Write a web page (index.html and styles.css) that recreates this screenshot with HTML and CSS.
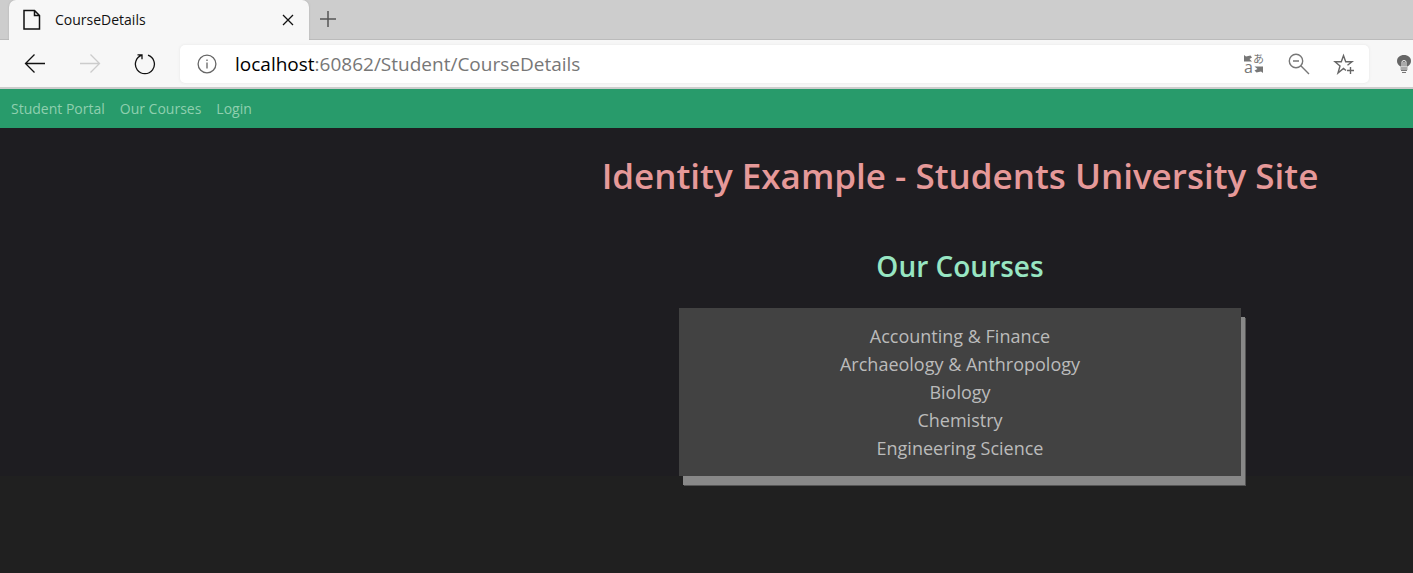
FILE: index.html
```html
<!DOCTYPE html>
<html lang="en">
<head>
<meta charset="utf-8">
<title>CourseDetails</title>
<link rel="stylesheet" href="styles.css">
</head>
<body>
<header class="browser">
  <div class="tabstrip">
    <div class="tab">
      <svg class="tab-icon" width="18" height="22" viewBox="0 0 18 22" fill="none" stroke="#111" stroke-width="1.5"><path d="M1 1.500h10.500l5 5v13.500h-15.500zM11.500 1.500v5h5"/></svg>
      <span class="tab-title">CourseDetails</span>
      <button class="tab-close" type="button" aria-label="Close tab"><svg width="12" height="12" viewBox="0 0 12 12" stroke="#111" stroke-width="1.300"><path d="M1 1l10 10M11 1L1 11"/></svg></button>
    </div>
    <button class="tab-new" type="button" aria-label="New tab"><svg width="18" height="18" viewBox="0 0 18 18" stroke="#555" stroke-width="1.500"><path d="M9 1v16M1 9h16"/></svg></button>
  </div>
  <div class="toolbar">
    <button class="tool" type="button" aria-label="Back"><svg width="22" height="20" viewBox="0 0 22 20" fill="none" stroke="#111" stroke-width="1.300"><path d="M21 9.500H2M10.500 .5l-9 9 9 9"/></svg></button>
    <button class="tool" type="button" aria-label="Forward" disabled><svg width="22" height="20" viewBox="0 0 22 20" fill="none" stroke="#ccc" stroke-width="1.300"><path d="M1 9.500h19M11.500 .5l9 9-9 9"/></svg></button>
    <button class="tool" type="button" aria-label="Refresh"><svg width="22" height="22" viewBox="0 0 22 22" fill="none" stroke="#111" stroke-width="1.300"><path d="M14 2.200A9.500 9.500 0 1 1 7.800 2.200M3.500 1.800H8v4.500"/></svg></button>
    <div class="address">
      <svg width="20" height="20" viewBox="0 0 20 20" fill="none" stroke="#666" stroke-width="1.300"><circle cx="10" cy="10" r="8.900"/><path d="M10 8.500v6M10 5.500v1.500"/></svg>
      <a class="url" href="#"><span class="host">localhost</span>:60862/Student/CourseDetails</a>
      <div class="actions">
        <button class="action" type="button" aria-label="Translate"><svg width="24" height="32" viewBox="-2 -5 24 32" fill="none"><path fill="#777" d="M0 2l2 1.500L6.500 2.500 8 4.500 5.500 6 8 8.500H0zM19 20l-2-1.500-4.500 1-2-2 3-1.500-3-2.500H19z"/><text class="glyph-jp" x="9" y="10">あ</text><text class="glyph-a" x="0" y="20">a</text></svg></button>
        <button class="action" type="button" aria-label="Zoom out"><svg width="22" height="22" viewBox="0 0 22 22" fill="none" stroke="#777" stroke-width="1.400"><circle cx="8" cy="8" r="6.700"/><path d="M5 8h6M12.800 12.800L21 21"/></svg></button>
        <button class="action" type="button" aria-label="Add to favorites"><svg width="22" height="22" viewBox="0 0 22 22" fill="none" stroke="#666" stroke-width="1.400"><path d="M13 17.500l-2.500-2-5.500 4.500 2-7-5-4.300h6.300L10.500 2.500l2.200 6.200H19l-4.500 3.500M14 17.500h7M17.500 14v7"/></svg></button>
      </div>
    </div>
    <button class="extension" type="button" aria-label="Extension"><svg width="14" height="20" viewBox="0 0 14 20"><path fill="#666" d="M7 1C3 1 0 3.500 0 7c0 2.500 1.500 4.500 3.500 5.500h7C12.500 11.500 14 9.500 14 7c0-3.500-3-6-7-6z"/><path fill="none" stroke="#eee" stroke-width="1" d="M5 13V8q0-1.500 2-1.500T9 8v5M7 8v5"/><path fill="#aaa" d="M3.500 13h7v3h-7z"/><path fill="#777" d="M4 16h6v1H4zM5 18h4v1H5z"/></svg></button>
  </div>
</header>
<nav class="site-nav">
  <a href="#">Student Portal</a>
  <a href="#">Our Courses</a>
  <a href="#">Login</a>
</nav>
<main class="page">
  <h1>Identity Example - Students University Site</h1>
  <h2>Our Courses</h2>
  <ul class="courses">
    <li>Accounting &amp; Finance</li>
    <li>Archaeology &amp; Anthropology</li>
    <li>Biology</li>
    <li>Chemistry</li>
    <li>Engineering Science</li>
  </ul>
</main>
</body>
</html>
```
FILE: styles.css
```css
* { box-sizing: border-box; }
body {
  margin: 0;
  min-height: 100vh;
  background: #202020;
  font-family: "Open Sans", "Noto Sans", sans-serif;
}
button {
  display: flex;
  align-items: center;
  justify-content: center;
  padding: 0;
  border: 0;
  background: none;
}
a { text-decoration: none; }
svg { display: block; flex: none; }

.browser { background: #f7f7f7; border-bottom: 2px solid #ccc; }
.tabstrip {
  display: flex;
  height: 40px;
  padding-left: 9px;
  background: #cdcdcd;
  border-bottom: 1px solid #bbb;
}
.tab {
  display: flex;
  align-items: center;
  width: 300px;
  height: 40px;
  padding: 0 14px;
  background: #f7f7f7;
  border-radius: 7px 7px 0 0;
  box-shadow: 0 0 2px #aaa;
  clip-path: inset(0 -3px 0 -3px);
}
.tab-title { flex: 1; margin-left: 14px; padding-bottom: 2px; font-size: 14px; color: #111; }
.tab-close { width: 14px; height: 14px; }
.tab-new { width: 38px; height: 38px; }
.toolbar { display: flex; align-items: center; height: 47px; padding-left: 7px; }
.tool { width: 55px; height: 40px; }
.address {
  display: flex;
  flex: 1;
  align-items: center;
  height: 38px;
  margin-left: 8px;
  padding: 0 14px 0 17px;
  background: #fff;
  border-radius: 5px;
  box-shadow: 0 0 3px #e4e4e4;
}
.url { flex: 1; margin-left: 18px; font-size: 19px; color: #777; }
.host { color: #000; }
.actions { display: flex; gap: 23px; }
.action { width: 22px; height: 24px; }
.glyph-jp { font: 11px "Noto Sans CJK JP", sans-serif; fill: #777; }
.glyph-a { font: 16px "Open Sans", sans-serif; fill: #777; }
.extension { width: 16px; margin: 0 1px 0 27px; }

.site-nav {
  display: flex;
  align-items: center;
  gap: 15px;
  height: 39px;
  padding-left: 11px;
  background: #289b6b;
}
.site-nav a { font-size: 14px; color: #8fcfaf; }

.page {
  display: flex;
  flex-direction: column;
  align-items: center;
  padding: 24px 0 0 507px;
  background: #1e1d21;
}
h1 {
  margin: 0;
  font-size: 35px;
  font-weight: 600;
  line-height: 48px;
  color: #e69999;
  white-space: nowrap;
}
h2 {
  margin: 48px 0 24px;
  font-size: 28px;
  font-weight: 600;
  line-height: 36px;
  color: #98e6c3;
}
.courses {
  width: 62%;
  margin: 0;
  padding: 14px;
  list-style: none;
  text-align: center;
  font-size: 18px;
  line-height: 28px;
  color: #bbb;
  background: #424242;
  box-shadow: 4px 9px #888, 5px 10px #555;
}
```
